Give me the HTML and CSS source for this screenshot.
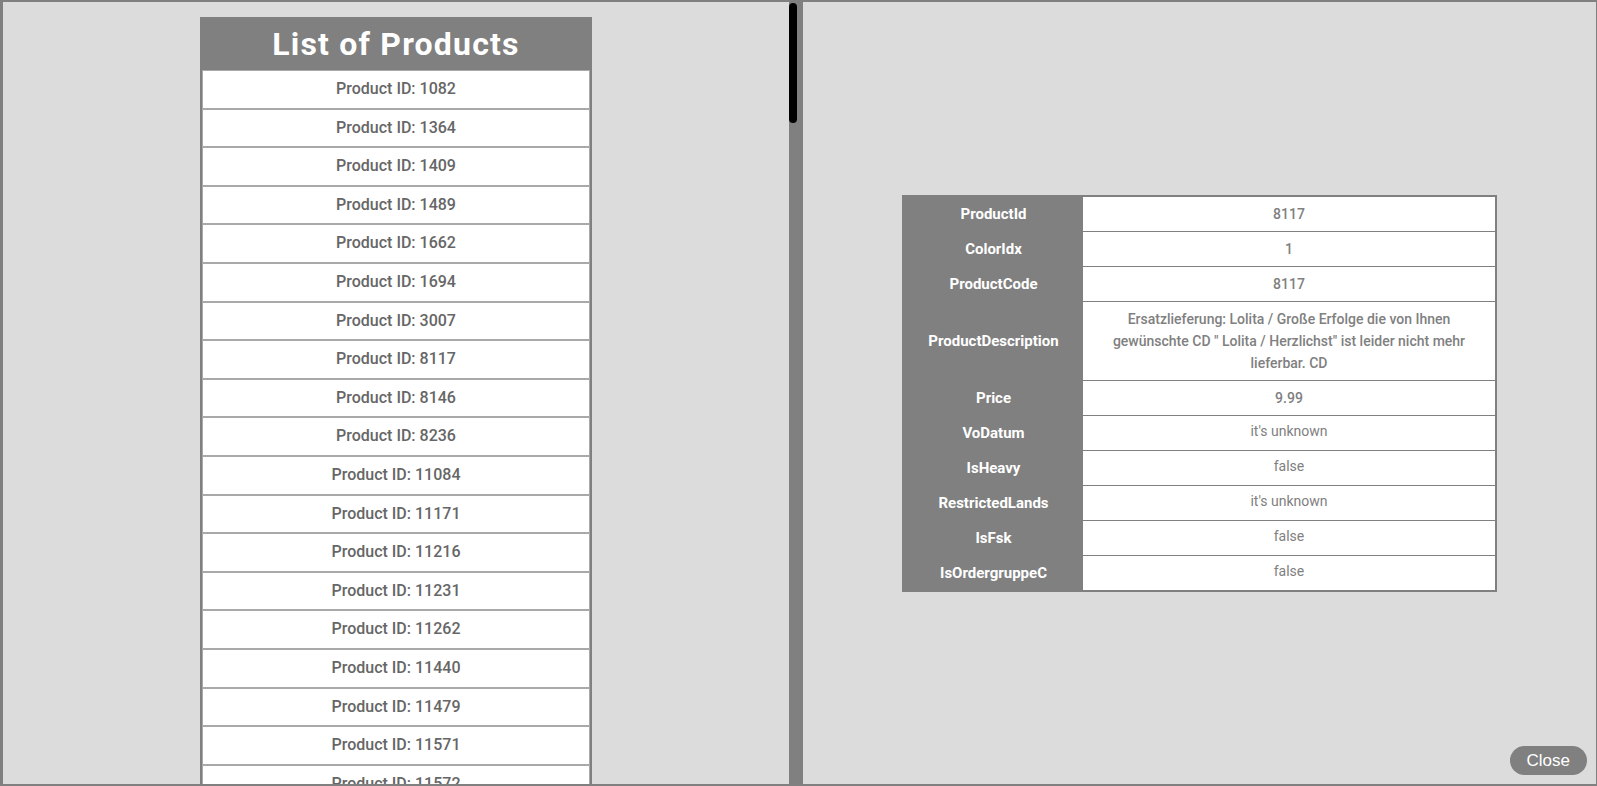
FILE: index.html
```html
<!DOCTYPE html>
<html lang="de">
<head>
<meta charset="utf-8">
<title>List of Products</title>
<link rel="stylesheet" href="styles.css">
</head>
<body>
<div class="frame">
  <div class="left-pane">
    <div class="product-list">
      <div class="list-header">List of Products</div>
      <div class="list-row">Product ID: 1082</div>
      <div class="list-row">Product ID: 1364</div>
      <div class="list-row">Product ID: 1409</div>
      <div class="list-row">Product ID: 1489</div>
      <div class="list-row">Product ID: 1662</div>
      <div class="list-row">Product ID: 1694</div>
      <div class="list-row">Product ID: 3007</div>
      <div class="list-row">Product ID: 8117</div>
      <div class="list-row">Product ID: 8146</div>
      <div class="list-row">Product ID: 8236</div>
      <div class="list-row">Product ID: 11084</div>
      <div class="list-row">Product ID: 11171</div>
      <div class="list-row">Product ID: 11216</div>
      <div class="list-row">Product ID: 11231</div>
      <div class="list-row">Product ID: 11262</div>
      <div class="list-row">Product ID: 11440</div>
      <div class="list-row">Product ID: 11479</div>
      <div class="list-row">Product ID: 11571</div>
      <div class="list-row">Product ID: 11572</div>
    </div>
  </div>
  <div class="gutter"><div class="thumb"></div></div>
  <div class="right-pane">
    <table class="details">
      <tr><td class="label">ProductId</td><td class="value num">8117</td></tr>
      <tr><td class="label">ColorIdx</td><td class="value num">1</td></tr>
      <tr><td class="label">ProductCode</td><td class="value num">8117</td></tr>
      <tr><td class="label">ProductDescription</td><td class="value num desc">Ersatzlieferung: Lolita / Große Erfolge die von Ihnen gewünschte CD " Lolita / Herzlichst" ist leider nicht mehr lieferbar. CD</td></tr>
      <tr><td class="label">Price</td><td class="value num">9.99</td></tr>
      <tr><td class="label">VoDatum</td><td class="value plain">it's unknown</td></tr>
      <tr><td class="label">IsHeavy</td><td class="value plain">false</td></tr>
      <tr><td class="label">RestrictedLands</td><td class="value plain">it's unknown</td></tr>
      <tr><td class="label">IsFsk</td><td class="value plain">false</td></tr>
      <tr><td class="label">IsOrdergruppeC</td><td class="value plain">false</td></tr>
    </table>
  </div>
</div>
<button class="close-btn">Close</button>
</body>
</html>
```
FILE: styles.css
```css
html, body {
  margin: 0;
  padding: 0;
  height: 100%;
  overflow: hidden;
}
body {
  font-family: Roboto, "Liberation Sans", sans-serif;
  background: #dcdcdc;
}
.frame {
  box-sizing: border-box;
  height: 100vh;
  display: flex;
  border-style: solid;
  border-color: #808080;
  border-width: 2px 1px 2px 3px;
  background: #dcdcdc;
}
.left-pane {
  width: 786px;
  flex: none;
  overflow: hidden;
  display: flex;
  flex-direction: column;
  align-items: center;
  padding-top: 15px;
  box-sizing: border-box;
}
.product-list {
  width: 392px;
  box-sizing: border-box;
  border: 2px solid #808080;
  border-bottom: none;
  background: #fff;
  flex: none;
}
.list-header {
  background: #808080;
  color: #fff;
  font-weight: 700;
  font-size: 32px;
  letter-spacing: 1.2px;
  text-align: center;
  height: 51px;
  line-height: 51px;
}
.list-row {
  border: 1px solid #a9a9a9;
  padding: 9px 0;
  line-height: 18.6px;
  font-size: 16px;
  font-weight: 500;
  color: #666;
  text-align: center;
  background: #fff;
}
.gutter {
  width: 14px;
  flex: none;
  background: #808080;
}
.thumb {
  width: 8px;
  height: 120px;
  margin-top: 1px;
  background: #000;
  border-radius: 4px;
}
.right-pane {
  flex: 1;
  display: flex;
  align-items: center;
  justify-content: center;
}
.details {
  width: 595px;
  border-collapse: collapse;
  border: 2px solid #808080;
  background: #fff;
  font-size: 14px;
}
.details td {
  border-bottom: 1px solid #808080;
  padding: 6px 8px;
  line-height: 22px;
  text-align: center;
  vertical-align: middle;
}
.details td.label {
  width: 163px;
  background: #808080;
  color: #fff;
  font-weight: 700;
  font-size: 15px;
}
.details td.value {
  color: #808080;
}
.details td.num {
  font-weight: 500;
}
.details td.plain {
  font-weight: 400;
  padding-top: 4px;
  padding-bottom: 8px;
}
.details td.desc {
  padding-left: 24px;
  padding-right: 24px;
}
.close-btn {
  position: fixed;
  right: 10px;
  bottom: 11px;
  height: 29px;
  padding: 0 17px;
  border: none;
  border-radius: 15px;
  background: #808080;
  color: #fff;
  font-family: "Liberation Sans", Arial, sans-serif;
  font-size: 17px;
  line-height: 29px;
  cursor: pointer;
}
```
